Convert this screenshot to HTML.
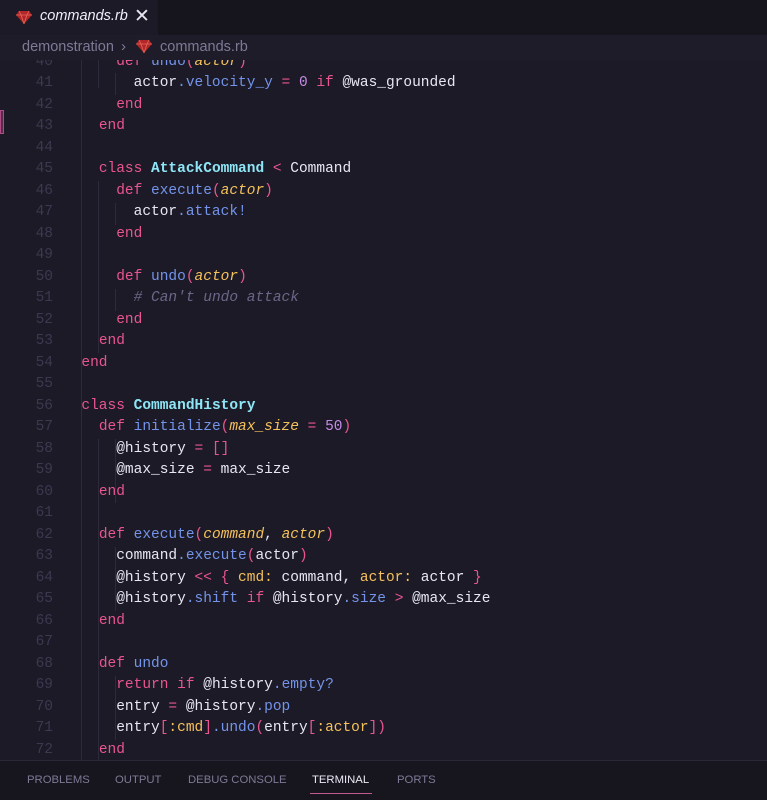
<!DOCTYPE html>
<html><head><meta charset="utf-8"><style>
*{margin:0;padding:0;box-sizing:border-box}
body{width:767px;height:800px;overflow:hidden;background:#1c1a26;font-family:"Liberation Sans",sans-serif;position:relative}
#tabbar{position:absolute;left:0;top:0;width:767px;height:35px;background:#16151d}
#tab{position:absolute;left:0;top:0;width:158px;height:35px;background:#1c1a26;color:#f0eef8;font-style:italic;font-size:14.5px}
#tab span{position:absolute;left:40px;top:8px}
#tab .x{position:absolute;left:134px;top:5px;font-style:normal;font-size:19px;color:#e8e6f0}
.gem{position:absolute;width:16px;height:14px}
#bc{position:absolute;left:0;top:35px;width:767px;height:25px;background:#1e1c29;color:#7d7a96;font-size:14.5px}
#ed{position:absolute;left:4px;top:60px;width:763px;height:700px;overflow:hidden;background:#1c1a26}
.ln{position:absolute;left:0;width:49px;text-align:right;color:#3b3950;font-family:"Liberation Mono",monospace;font-size:14.5px;height:21.5px;line-height:21.5px}
.cd{position:absolute;left:60px;white-space:pre;color:#e8e6f2;font-family:"Liberation Mono",monospace;font-size:14.5px;height:21.5px;line-height:21.5px}
.k{color:#e9558f}.f{color:#7394ea}.p{color:#f5c15c;font-style:italic}.c{color:#8ee5f6;font-weight:bold}.m{color:#6a6788;font-style:italic}.o{color:#e9558f}.s{color:#f5c15c}.n{color:#c58be8}
.g{position:absolute;width:1px;background:#2c2a3b}
#panel{position:absolute;left:0;top:760px;width:767px;height:40px;background:#17161e;border-top:1px solid #2a2838;font-size:11.3px;color:#7d7a96}
#panel span{position:absolute;top:13px}
</style></head><body>
<div id="tabbar"><div id="tab">
<svg class="gem" style="left:16px;top:10px" viewBox="0 0 16 14"><path d="M3 1h10l3 4-8 9-8-9z" fill="#b3272a"/><path d="M3 1l2 4h6l2-4M0 5h16M5 5l3 9 3-9" stroke="#e36a5a" stroke-width="0.8" fill="none"/></svg>
<span>commands.rb</span><div class="x">✕</div></div></div>
<div id="bc"><span style="position:absolute;left:22px;top:4px">demonstration</span><span style="position:absolute;left:121px;top:3px;font-size:15px">›</span>
<svg class="gem" style="left:136px;top:4px" viewBox="0 0 16 14"><path d="M3 1h10l3 4-8 9-8-9z" fill="#b3272a"/><path d="M3 1l2 4h6l2-4M0 5h16M5 5l3 9 3-9" stroke="#e36a5a" stroke-width="0.8" fill="none"/></svg>
<span style="position:absolute;left:160px;top:4px">commands.rb</span></div>
<div style="position:absolute;left:0;top:110px;width:4px;height:24px;background:#5a2a48;border:1px solid #b04a86"></div>
<div id="ed">
<div class="g" style="left:77px;top:0;height:700px"></div>
<div class="g" style="left:94px;top:0;height:28px"></div>
<div class="g" style="left:111px;top:13px;height:22px"></div>
<div class="g" style="left:94px;top:121px;height:172px"></div>
<div class="g" style="left:111px;top:143px;height:22px"></div>
<div class="g" style="left:111px;top:229px;height:22px"></div>
<div class="g" style="left:94px;top:379px;height:321px"></div>
<div class="g" style="left:111px;top:379px;height:64px"></div>
<div class="g" style="left:111px;top:487px;height:64px"></div>
<div class="g" style="left:111px;top:616px;height:64px"></div>
<div id="lines"></div>
</div>
<div id="panel"><span style="left:27px">PROBLEMS</span><span style="left:115px">OUTPUT</span><span style="left:188px">DEBUG CONSOLE</span><span style="left:312px;color:#eceaf4">TERMINAL</span><div style="position:absolute;left:310px;top:32px;width:62px;height:1px;background:#c05a90"></div><span style="left:397px">PORTS</span></div>
<script>
var L=[
[40,'    <span class="k">def</span> <span class="f">undo</span><span class="o">(</span><span class="p">actor</span><span class="o">)</span>'],
[41,'      actor<span class="f">.velocity_y</span> <span class="o">=</span> <span class="n">0</span> <span class="k">if</span> @was_grounded'],
[42,'    <span class="k">end</span>'],
[43,'  <span class="k">end</span>'],
[44,''],
[45,'  <span class="k">class</span> <span class="c">AttackCommand</span> <span class="o">&lt;</span> Command'],
[46,'    <span class="k">def</span> <span class="f">execute</span><span class="o">(</span><span class="p">actor</span><span class="o">)</span>'],
[47,'      actor<span class="f">.attack!</span>'],
[48,'    <span class="k">end</span>'],
[49,''],
[50,'    <span class="k">def</span> <span class="f">undo</span><span class="o">(</span><span class="p">actor</span><span class="o">)</span>'],
[51,'      <span class="m"># Can\'t undo attack</span>'],
[52,'    <span class="k">end</span>'],
[53,'  <span class="k">end</span>'],
[54,'<span class="k">end</span>'],
[55,''],
[56,'<span class="k">class</span> <span class="c">CommandHistory</span>'],
[57,'  <span class="k">def</span> <span class="f">initialize</span><span class="o">(</span><span class="p">max_size</span> <span class="o">=</span> <span class="n">50</span><span class="o">)</span>'],
[58,'    @history <span class="o">=</span> <span class="o">[]</span>'],
[59,'    @max_size <span class="o">=</span> max_size'],
[60,'  <span class="k">end</span>'],
[61,''],
[62,'  <span class="k">def</span> <span class="f">execute</span><span class="o">(</span><span class="p">command</span>, <span class="p">actor</span><span class="o">)</span>'],
[63,'    command<span class="f">.execute</span><span class="o">(</span>actor<span class="o">)</span>'],
[64,'    @history <span class="o">&lt;&lt;</span> <span class="o">{</span> <span class="s">cmd:</span> command, <span class="s">actor:</span> actor <span class="o">}</span>'],
[65,'    @history<span class="f">.shift</span> <span class="k">if</span> @history<span class="f">.size</span> <span class="o">&gt;</span> @max_size'],
[66,'  <span class="k">end</span>'],
[67,''],
[68,'  <span class="k">def</span> <span class="f">undo</span>'],
[69,'    <span class="k">return</span> <span class="k">if</span> @history<span class="f">.empty?</span>'],
[70,'    entry <span class="o">=</span> @history<span class="f">.pop</span>'],
[71,'    entry<span class="o">[</span><span class="s">:cmd</span><span class="o">]</span><span class="f">.undo</span><span class="o">(</span>entry<span class="o">[</span><span class="s">:actor</span><span class="o">])</span>'],
[72,'  <span class="k">end</span>']];
var h='';
L.forEach(function(a){var t=84+(a[0]-41)*21.5-10.75-60;
h+='<div class="ln" style="top:'+t+'px">'+a[0]+'</div><div class="cd" style="top:'+t+'px">'+'  '+a[1]+'</div>';});
document.getElementById('lines').innerHTML=h;
</script>
</body></html>
